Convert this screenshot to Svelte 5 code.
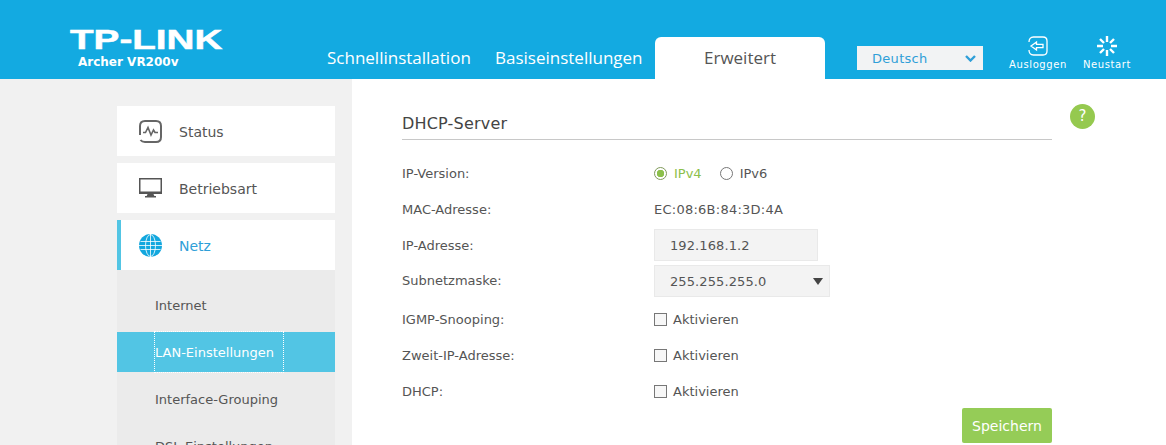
<script>
	const menu = [
		{ label: 'Status', icon: 'status' },
		{ label: 'Betriebsart', icon: 'monitor' },
		{ label: 'Netz', icon: 'globe', active: true }
	];
	const submenu = ['Internet', 'LAN-Einstellungen', 'Interface-Grouping', 'DSL-Einstellungen'];
	const checks = ['IGMP-Snooping:', 'Zweit-IP-Adresse:', 'DHCP:'];
</script>

<div class="page">
	<header class="top">
		<div class="brand">
			<div class="logo">TP-LINK</div>
			<div class="model">Archer VR200v</div>
		</div>
		<nav class="tabs">
			<span class="tab quick">Schnellinstallation</span>
			<span class="tab basic">Basiseinstellungen</span>
			<span class="tab current">Erweitert</span>
		</nav>
		<div class="lang">
			<span>Deutsch</span>
			<svg width="11" height="7" viewBox="0 0 11 7"><path d="M1 1l4.500 4.500L10 1" fill="none" stroke="#2f9fd8" stroke-width="2.400"/></svg>
		</div>
		<div class="tool logout">
			<svg width="20" height="20" viewBox="0 0 20 20" fill="none" stroke="#fff" stroke-width="1.300">
				<path d="M1 6C1 3 2.500 1 5.500 1H15c2.500 0 4 1.500 4 4v10c0 2.500-1.500 4-4 4H5.500C2.500 19 1 17 1 14"/>
				<path d="M3 10L8.500 6v2.300H15v3.400H8.500V14z"/>
			</svg>
			<span>Ausloggen</span>
		</div>
		<div class="tool restart">
			<svg width="20" height="20" viewBox="0 0 20 20" stroke="#fff" stroke-width="2.400">
				<path d="M10 0v6M10 14v6M0 10h6M14 10h6M3 3l4 4M13 13l4 4M3 17l4-4M13 7l4-4"/>
			</svg>
			<span>Neustart</span>
		</div>
	</header>

	<div class="body">
		<aside class="side">
			{#each menu as item}
				<div class="item" class:active={item.active}>
					<span class="icon">
						{#if item.icon === 'status'}
							<svg width="23" height="23" viewBox="0 0 23 23" fill="none" stroke="#666" stroke-width="2">
								<path d="M1 15V6c0-3 2-5 5-5h11c3 0 5 2 5 5v11c0 3-2 5-5 5H6c-2 0-3.500-.7-4.500-2"/>
								<path d="M4 12.500h2.500L9 7.500l3 7.500 2.500-5 1.500 2.500h3" stroke-width="1.600"/>
							</svg>
						{:else if item.icon === 'monitor'}
							<svg width="23" height="20" viewBox="0 0 23 20">
								<path d="M0 0h23v16H0z" fill="#555"/>
								<path d="M1.500 1.500h20v12h-20z" fill="#fff"/>
								<path d="M8.500 16h6l1 2.500h-8z" fill="#555"/>
								<path d="M6 18h11v1.500H6z" fill="#555"/>
							</svg>
						{:else}
							<svg width="23" height="23" viewBox="0 0 23 23">
								<circle cx="11.500" cy="11.500" r="11.500" fill="#13a7de"/>
								<g fill="none" stroke="#fff" stroke-width=".8">
									<ellipse cx="11.500" cy="11.500" rx="5" ry="11"/>
									<path d="M11.500 0v23M1.500 7.500h20M0 11.500h23M1.500 15.500h20"/>
								</g>
							</svg>
						{/if}
					</span>
					<span class="itemlabel">{item.label}</span>
				</div>
			{/each}
			<div class="sub">
				{#each submenu as name}
					<div class="subitem" class:on={name === 'LAN-Einstellungen'}>
						<span class="sublabel">{name}</span>
					</div>
				{/each}
			</div>
		</aside>

		<main class="content">
			<span class="help">?</span>
			<h1>DHCP-Server</h1>

			<div class="row r-version">
				<span class="label">IP-Version:</span>
				<div class="radios">
					<span class="radio on"></span><span class="green">IPv4</span>
					<span class="radio second"></span><span>IPv6</span>
				</div>
			</div>
			<div class="row r-mac">
				<span class="label">MAC-Adresse:</span>
				<span class="mac">EC:08:6B:84:3D:4A</span>
			</div>
			<div class="row r-ip">
				<span class="label">IP-Adresse:</span>
				<span class="field">192.168.1.2</span>
			</div>
			<div class="row r-mask">
				<span class="label">Subnetzmaske:</span>
				<span class="field select">255.255.255.0<i class="caret"></i></span>
			</div>
			{#each checks as label}
				<div class="row r-check">
					<span class="label">{label}</span>
					<div class="check"><span class="box"></span>Aktivieren</div>
				</div>
			{/each}
			<div class="actions">
				<button>Speichern</button>
			</div>
		</main>
	</div>
</div>

<style>
	:global(body) {
		margin: 0;
		background: #fff;
	}

	.page {
		height: 445px;
		overflow: hidden;
		font-family: "DejaVu Sans", Verdana, sans-serif;
		font-size: 13px;
		color: #555;
	}

	/* header */
	.top {
		display: flex;
		align-items: flex-end;
		height: 79px;
		background: #13aae1;
		color: #fff;
	}

	.brand {
		width: 327px;
		padding-left: 70px;
		box-sizing: border-box;
		align-self: flex-start;
		padding-top: 30px;
	}

	.logo {
		font-family: "Liberation Sans", Arial, sans-serif;
		font-weight: 700;
		font-size: 28px;
		line-height: 20px;
		transform: scaleX(1.38);
		transform-origin: left center;
		-webkit-text-stroke: 0.5px #fff;
	}

	.model {
		font-size: 12px;
		font-weight: 700;
		line-height: 14px;
		padding-left: 8px;
		margin-top: 5px;
	}

	.tabs {
		display: flex;
		align-items: flex-end;
		height: 42px;
	}

	.tab {
		font-family: "Open Sans", sans-serif;
		font-size: 17px;
		line-height: 42px;
		height: 42px;
		white-space: nowrap;
	}

	.quick { width: 168px; }
	.basic { width: 160px; }

	.current {
		width: 170px;
		text-align: center;
		background: #fff;
		color: #555;
		border-radius: 6px 6px 0 0;
	}

	.lang {
		display: flex;
		align-items: center;
		justify-content: space-between;
		box-sizing: border-box;
		width: 126px;
		height: 24px;
		margin: 0 0 9px 32px;
		padding: 0 7px 0 15px;
		background: #f2f3f4;
		color: #2f9fd8;
		letter-spacing: .3px;
	}

	.tool {
		display: flex;
		flex-direction: column;
		align-items: center;
		gap: 3px;
		font-size: 10px;
		letter-spacing: .6px;
		padding-bottom: 8px;
	}

	.tool span { line-height: 12px; }
	.logout { width: 60px; margin-left: 25px; }
	.restart { width: 50px; margin-left: 14px; }

	.body {
		display: flex;
	}

	/* sidebar */
	.side {
		box-sizing: border-box;
		width: 352px;
		height: 366px;
		padding: 27px 17px 0 117px;
		background: #f1f1f1;
	}

	.item {
		display: flex;
		align-items: center;
		height: 50px;
		margin-bottom: 7px;
		padding-left: 22px;
		background: #fff;
		font-size: 14px;
	}

	.item.active {
		margin-bottom: 0;
		padding-left: 18px;
		border-left: 4px solid #52c5e4;
		color: #2f9fd8;
	}

	.icon {
		display: flex;
		width: 40px;
	}

	.itemlabel {
		padding-top: 2px;
	}

	.sub {
		padding-top: 15px;
		background: #ebebeb;
	}

	.subitem {
		height: 40px;
		margin-bottom: 7px;
		padding-left: 38px;
		line-height: 42px;
	}

	.subitem.on {
		background: #52c5e4;
		color: #fff;
	}

	.sublabel {
		display: inline-block;
		height: 40px;
	}

	.subitem.on .sublabel {
		width: 128px;
		outline: 1px dotted #fff;
	}

	/* form */
	.content {
		position: relative;
		box-sizing: border-box;
		width: 700px;
		padding: 32px 0 0 50px;
	}

	.help {
		position: absolute;
		left: 718px;
		top: 25px;
		width: 25px;
		height: 25px;
		border-radius: 50%;
		background: #95c94f;
		color: #fff;
		font-size: 15px;
		line-height: 25px;
		text-align: center;
	}

	h1 {
		margin: 0 0 15px;
		height: 28px;
		border-bottom: 1px solid #c8c8c8;
		font-size: 16px;
		font-weight: 400;
		line-height: 26px;
		letter-spacing: .2px;
		color: #444;
	}

	.row {
		display: grid;
		grid-template-columns: 252px 1fr;
		align-items: center;
		height: 36px;
	}

	.r-ip { height: 36px; }
	.r-mask { height: 35px; margin-bottom: 3px; }

	.label {
		color: #555;
	}

	.mac {
		letter-spacing: .25px;
	}

	.radios {
		display: flex;
		align-items: center;
	}

	.radio {
		box-sizing: border-box;
		width: 13px;
		height: 13px;
		margin-right: 7px;
		border: 1px solid #777;
		border-radius: 50%;
	}

	.radio.on {
		border-color: #7f9a5a;
		background: radial-gradient(circle, #8cc04b 0 3.500px, #fff 4px);
	}

	.radio.second { margin-left: 18px; }
	.green { color: #8cc04b; }

	.field {
		display: block;
		box-sizing: border-box;
		width: 164px;
		height: 32px;
		padding-left: 15px;
		background: #f3f3f3;
		border: 1px solid #e9e9e9;
		line-height: 31px;
		letter-spacing: .1px;
	}

	.select {
		position: relative;
		width: 176px;
	}

	.caret {
		position: absolute;
		right: 6px;
		top: 12px;
		border-left: 5px solid transparent;
		border-right: 5px solid transparent;
		border-top: 7px solid #444;
	}

	.check {
		display: flex;
		align-items: center;
	}

	.box {
		box-sizing: border-box;
		width: 13px;
		height: 13px;
		margin-right: 6px;
		border: 1px solid #777;
		background: #f7f7f7;
	}

	.actions {
		display: flex;
		justify-content: flex-end;
		margin-top: -1px;
	}

	button {
		width: 90px;
		height: 35px;
		border: 0;
		border-radius: 2px;
		background: #95cc57;
		color: #fff;
		font-family: "DejaVu Sans", Verdana, sans-serif;
		font-size: 14px;
	}
</style>
